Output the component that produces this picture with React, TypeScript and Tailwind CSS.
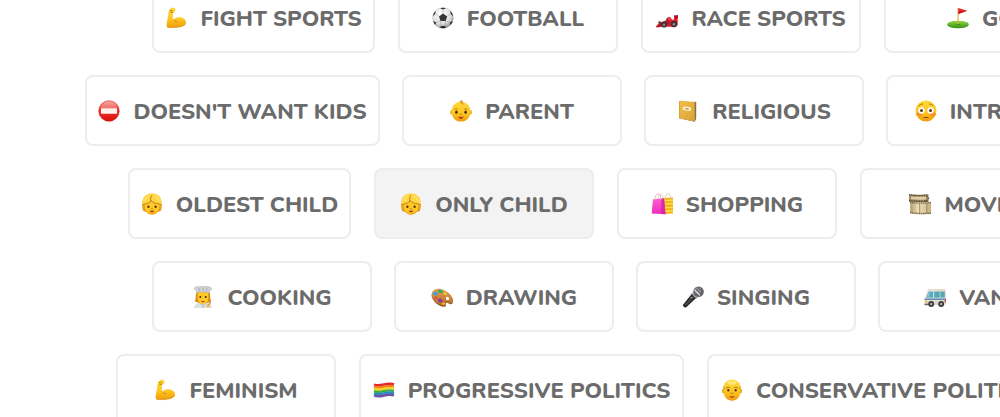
import type { ReactNode } from "react";

type Pill = { label: string; icon: ReactNode; width?: string; active?: boolean };
type Row = { indent: string; pills: Pill[] };

function Icon({ children }: { children: ReactNode }) {
  return (
    <svg viewBox="0 0 22 22" className="size-[22px] shrink-0" aria-hidden="true">
      {children}
    </svg>
  );
}

function Gradients() {
  return (
    <svg className="absolute size-0" aria-hidden="true">
      <defs>
        <linearGradient id="skin" x1="0" y1="0" x2="0" y2="1">
          <stop offset="0" stopColor="#ffd83a" />
          <stop offset="0.6" stopColor="#fdc41f" />
          <stop offset="1" stopColor="#ee9c0c" />
        </linearGradient>
        <linearGradient id="hair" x1="0" y1="0" x2="0" y2="1">
          <stop offset="0" stopColor="#ffe05c" />
          <stop offset="0.5" stopColor="#f5b92a" />
          <stop offset="1" stopColor="#d98e10" />
        </linearGradient>
        <radialGradient id="ball" cx="0.4" cy="0.3" r="0.75">
          <stop offset="0" stopColor="#ffffff" />
          <stop offset="0.65" stopColor="#dedede" />
          <stop offset="1" stopColor="#858585" />
        </radialGradient>
        <linearGradient id="red" x1="0" y1="0" x2="0" y2="1">
          <stop offset="0" stopColor="#f7938a" />
          <stop offset="0.4" stopColor="#ee3a30" />
          <stop offset="1" stopColor="#d90d08" />
        </linearGradient>
        <linearGradient id="green" x1="0" y1="0" x2="0" y2="1">
          <stop offset="0" stopColor="#8fd83f" />
          <stop offset="1" stopColor="#3f9a1c" />
        </linearGradient>
        <linearGradient id="book" x1="0" y1="0" x2="1" y2="1">
          <stop offset="0" stopColor="#f2c043" />
          <stop offset="1" stopColor="#d9a13a" />
        </linearGradient>
        <linearGradient id="pink" x1="0" y1="0" x2="0" y2="1">
          <stop offset="0" stopColor="#ff5fd0" />
          <stop offset="1" stopColor="#f02cc0" />
        </linearGradient>
        <linearGradient id="film" x1="0" y1="0" x2="1" y2="0">
          <stop offset="0" stopColor="#b39a6b" />
          <stop offset="0.4" stopColor="#f0e2bd" />
          <stop offset="1" stopColor="#c5ae80" />
        </linearGradient>
        <linearGradient id="wood" x1="0" y1="0" x2="0" y2="1">
          <stop offset="0" stopColor="#dda057" />
          <stop offset="1" stopColor="#bd6c24" />
        </linearGradient>
      </defs>
    </svg>
  );
}

const Biceps = () => (
  <Icon>
    <path
      d="M6.2 1.2C7.4.3 9.2.4 10 1.600c.7 1.100.5 2.300-.2 3.100-.6.7-1.400.8-2 .8.300 1.700 0 3.400-.1 5.400 0 .8.500 1.600 1.300 1.700 1.100-1.600 3.300-2.500 5.600-2.300 3.400.2 6.300 2.300 6.400 5 .1 2.400-2.300 3.900-5.200 4.400-3.500.7-7.800.9-11.600.9-1.700 0-2.700-.8-2.600-2.500C1.800 14.500 3.300 9.600 3.500 5.600c.1-2 .8-3.300 2.700-4.400Z"
      fill="url(#skin)"
    />
    <path d="M5.400 3.500c1-.7 1.700-.3 2.300.6M7.700 5.500 5.500 5.200M9 12.800c.3 1.100 1.200 1.900 2.600 2" fill="none" stroke="#bd7811" strokeWidth="0.9" strokeLinecap="round" />
    <path d="M2 20c3.800 1 9.600.7 14-.5 2-.6 4-1.700 4.800-3.300" fill="none" stroke="#dd8e09" strokeWidth="0.7" />
  </Icon>
);

const Soccer = () => (
  <Icon>
    <circle cx="11" cy="11" r="10.300" fill="url(#ball)" stroke="#999" strokeWidth="0.4" />
    <path d="m11 6.600 4.100 2.800-1.500 4.700H8.500L7 9.400Z" fill="#343434" />
    <path d="m8.200 1.200 2.900 1.400 2.700-1.400C12 .5 10 .5 8.200 1.200ZM1 9.200 3.400 6.600 3.700 4C2 5.500 1 7.300 1 9.200ZM18.300 4l.3 2.700L21 9.200c-.2-2-1.200-3.900-2.700-5.200ZM3.500 18l.6-2.600L1.300 14c.4 1.600 1.200 3 2.200 4ZM18.500 18l-.6-2.600 2.800-1.400c-.4 1.600-1.200 3-2.200 4ZM8 20.800l1-1.800h4l1 1.800c-2 .6-4 .6-6 0Z" fill="#2e2e2e" />
    <path d="M11 2.600v4M3.400 6.700 7 9.400M18.600 6.700l-3.500 2.700M4.100 15.400l4.400-1.300M17.900 15.400l-4.300-1.300M8.500 14.100 9 19M13.600 14.100 13 19" stroke="#999" strokeWidth="0.5" />
  </Icon>
);

const RaceCar = () => (
  <Icon>
    <path d="M0 19 4.600 15.300l5-1.600 1.800-3.200 2.200-.3 2.300 2.600 2.200-.2.400-3.600h3.200v9.300l-3 1.500H1Z" fill="#e11a2c" />
    <path d="m18 8.600 4-.5v3.100l-3.400.6Z" fill="#b80f22" />
    <path d="m4.500 15.500 5.400-1.600 4.400 1-3.600 3.700H1.700Z" fill="#8f2034" />
    <path d="m11.900 10.600 1.300-.8 1.700.6.900 2.400-4.600.8Z" fill="#f43745" />
    <path d="m9.600 13.800 1.600-3 1.200 2.500Z" fill="#663a42" />
    <path d="m0 19.600 4.200-1.100 1 1.500-4.800.4Z" fill="#bd1025" />
    <circle cx="8" cy="17.700" r="2.800" fill="#3b3334" />
    <circle cx="8" cy="17.700" r="1.200" fill="#9c8588" />
    <circle cx="18" cy="17.200" r="3.100" fill="#3b3334" />
    <circle cx="18" cy="17.200" r="1.300" fill="#a08c8c" />
    <path d="M4.300 14.800c-1 0-1.400.7-1.400 1.700" fill="none" stroke="#403034" strokeWidth="1.500" />
  </Icon>
);

const Golf = () => (
  <Icon>
    <ellipse cx="11" cy="17.800" rx="10.700" ry="3.500" fill="#378719" />
    <ellipse cx="11" cy="17.100" rx="10.700" ry="3.300" fill="url(#green)" />
    <ellipse cx="11.200" cy="17.400" rx="2" ry="0.700" fill="#397b15" />
    <path d="M11 1v16.500" stroke="#e2b44d" strokeWidth="1.200" />
    <path d="m11.400.9 8.800 2.900-8.800 3.200Z" fill="#e32929" />
    <path d="m11.400 4.700 8.800-.9-8.800 3.200Z" fill="#bd171e" />
  </Icon>
);

const NoEntry = () => (
  <Icon>
    <circle cx="11" cy="11" r="10.300" fill="url(#red)" stroke="#c91b13" strokeWidth="0.500" />
    <path d="M2.500 8.100C3.500 4 7 1.500 11 1.500s7.500 2.500 8.500 6.600Z" fill="#fff" opacity="0.220" />
    <rect x="3" y="8.300" width="16" height="5.400" rx="0.700" fill="#fff2ef" />
  </Icon>
);

const Baby = () => (
  <Icon>
    <ellipse cx="1.700" cy="12.300" rx="1.700" ry="2.300" fill="#f4af1b" />
    <ellipse cx="20.300" cy="12.300" rx="1.700" ry="2.300" fill="#f4af1b" />
    <path d="M11 1.700c5.800 0 9.400 4.200 9.400 10 0 6-3.900 9.900-9.400 9.900s-9.400-3.900-9.400-9.900c0-5.800 3.600-10 9.400-10Z" fill="url(#skin)" />
    <path d="M10 1.700C10.100.7 11.200 0 12 .8c.9.900.4 2.200-.8 2.500M11 2c1.700.3 2 .9 1.700 2.100" fill="none" stroke="#c78317" strokeWidth="1" strokeLinecap="round" />
    <ellipse cx="6.400" cy="12.200" rx="1.200" ry="1.600" fill="#432b18" />
    <ellipse cx="15.600" cy="12.200" rx="1.200" ry="1.600" fill="#432b18" />
    <path d="M4.500 9.500c.8-.8 2-.9 3-.4M14.500 9.100c1-.5 2.200-.4 3 .4M10 14.200c.5.500 1.500.500 2 0" fill="none" stroke="#bd7918" strokeWidth="0.900" strokeLinecap="round" />
    <path d="M8.300 16.600c1.700.6 3.700.6 5.400 0-.5 1.700-1.400 2.400-2.700 2.400s-2.200-.7-2.700-2.400Z" fill="#b5332c" />
  </Icon>
);

const Book = () => (
  <Icon>
    <path d="m2 1 15.700 1.200 1.500-.7v17.200l-1.500 3L2 18.300Z" fill="#8b6b4a" />
    <path d="m2 .7 2.200-.3 15 .8-1.500 1Z" fill="#f5e7b6" />
    <path d="m2 1 15.700 1.200v19.300L2 18.300Z" fill="url(#book)" />
    <path d="M2.600 1.200v17" stroke="#d09a35" strokeWidth="0.8" />
    <path d="M17.700 2.200v19.300" stroke="#c79445" strokeWidth="0.500" />
    <path d="m8 6.600 4 .4c1.500.2 2.300.9 2.300 2.100s-.8 1.900-2.300 1.800l-4-.4c-1.500-.2-2.300-.9-2.300-2.100S6.500 6.500 8 6.600Z" fill="#fbeec8" />
    <path d="m8.300 8.700 3.400.4" stroke="#9c6b31" strokeWidth="1" />
  </Icon>
);

const Flushed = () => (
  <Icon>
    <circle cx="11" cy="11" r="10.500" fill="url(#skin)" />
    <ellipse cx="4.400" cy="14.200" rx="3" ry="2.200" fill="#f57b2a" opacity="0.650" />
    <ellipse cx="17.600" cy="14.200" rx="3" ry="2.200" fill="#f57b2a" opacity="0.650" />
    <circle cx="6.500" cy="10.500" r="3.200" fill="#fff" />
    <circle cx="15.500" cy="10.500" r="3.200" fill="#fff" />
    <circle cx="6.500" cy="10.600" r="1.500" fill="#5b3516" />
    <circle cx="15.500" cy="10.600" r="1.500" fill="#5b3516" />
    <path d="M4 5.700c.9-1.100 2.100-1.700 3.500-1.700M14.500 4c1.400 0 2.600.6 3.500 1.700" fill="none" stroke="#a65d11" strokeWidth="0.900" strokeLinecap="round" />
    <path d="M9 17.500h4" stroke="#8a4517" strokeWidth="1.100" strokeLinecap="round" />
  </Icon>
);

const Child = () => (
  <Icon>
    <path d="M11 .4c5.800-.3 9.600 3.300 9.400 9.100.7 2.100.8 5.600-.6 8.200-2.600 2-15 2-17.600 0-1.400-2.600-1.300-6.100-.6-8.200C1.400 3.700 5.200.1 11 .4Z" fill="url(#hair)" />
    <path d="M4 10.500C4 7 7 5.600 11 5.600s7 1.400 7 4.900v4c0 4.600-3.200 7.100-7 7.100s-7-2.500-7-7.100Z" fill="#ffc928" />
    <path d="M4.300 16.500c.9 3.400 3.600 5.100 6.700 5.100s5.800-1.700 6.700-5.100c-1.500 2.400-3.800 3.800-6.700 3.800s-5.200-1.400-6.700-3.800Z" fill="#f0a314" />
    <path d="M1.600 12C1.200 5 5 .6 11 .5s9.800 4.500 9.400 11.500c-.8.300-1.700-.1-2.500-1-3.200-.2-5.800-1.100-7.700-3C8.500 10 6.500 11 4.100 11c-.8.900-1.700 1.300-2.500 1Z" fill="#ffd544" />
    <path d="M1.800 11.700c.9 0 1.600-.3 2.300-.9 2.500-.1 4.500-1.200 6.100-3 1.900 1.900 4.500 2.900 7.700 3 .7.600 1.400.9 2.300.9M9.900 7.800c-.6-2-.3-3.800.8-5.400" fill="none" stroke="#bd7411" strokeWidth="0.900" strokeLinecap="round" />
    <path d="M4.200 7.500c.4-2 1.600-3.400 3.300-4.200M14 3.300c1.800.6 3.200 2.200 3.700 4.200" fill="none" stroke="#fff0a0" strokeWidth="1" strokeLinecap="round" />
    <ellipse cx="7.400" cy="13.700" rx="1.100" ry="1.300" fill="#4b2c13" />
    <ellipse cx="14.600" cy="13.700" rx="1.100" ry="1.300" fill="#4b2c13" />
    <path d="M10.200 15.700c.5.300 1.100.3 1.600 0" fill="none" stroke="#b26c13" strokeWidth="0.800" strokeLinecap="round" />
    <path d="M8.700 17.400c1.500.5 3.100.5 4.600 0-.5 1.400-1.200 1.900-2.300 1.900s-1.800-.5-2.300-1.900Z" fill="#a93426" />
  </Icon>
);

const Bags = () => (
  <Icon>
    <path d="m13 5 9-.6.2 16L13 21Z" fill="#f2b512" />
    <path d="m13 7.500 9-.4M13 11l9-.3M13 14.500l9-.2M13 18l9-.2" stroke="#ffdf53" strokeWidth="1.300" />
    <path d="M14.300 6c-.2-7 5.300-7 5.600 0" fill="none" stroke="#dfc2a0" strokeWidth="0.900" />
    <path d="m2 6.200 11-.9 1.500 16L.7 20.600Z" fill="url(#pink)" />
    <path d="m10.400 5.500 2.600-.2 1.500 16-4.500-.2Z" fill="#d72ba9" />
    <path d="M4 7.200c0-8.500 5.800-8.500 6.200-.5" fill="none" stroke="#e6a9c5" strokeWidth="1" />
    <path d="M7.200 5.500c.6-6 4.700-5.300 5.100.3" fill="none" stroke="#d4c09b" strokeWidth="0.700" />
  </Icon>
);

const Film = () => (
  <Icon>
    <path d="M0 1.300c6 .8 11.500.8 19.300.3v7.600c-6.500.7-13.500.6-19.300-.4Z" fill="#a08a60" />
    <path d="M0 1.700c6 .8 11.500.8 19.300.3M0 7.500c6 1 12 1 19.300.5" stroke="#54472f" strokeWidth="1.300" strokeDasharray="1.100 0.600" fill="none" />
    <path d="M2 3.600c4 .3 9.600.4 15 0v2.800c-4.200.4-10 .4-15-.1Z" fill="#dfcea5" />
    <path d="M1.200 8.500c6.500 1.400 14 .8 20.800.3v12.100c-7 .7-14.500.7-20.800-.7Z" fill="url(#film)" />
    <path d="M1.200 9.300c6.500 1.400 14 .8 20.800.3M1.200 19.500c6.500 1.300 14 1.200 20.800.6" stroke="#6a5a3d" strokeWidth="1.300" strokeDasharray="1.100 0.700" fill="none" />
    <path d="M10.700 10.200v9.800M17.900 10.200V20" stroke="#8a7650" strokeWidth="0.800" />
    <path d="M17 3c4 1 3.700 4-1 5.100" fill="none" stroke="#5e5037" strokeWidth="1" />
  </Icon>
);

const Cook = () => (
  <Icon>
    <path d="M4.700 5.900C3.300 9 4.200 12 2.800 15.300l4 1.700h8.500l3.800-1.700c-1.300-3-.4-6.300-1.700-9.400Z" fill="#d98f14" />
    <path d="M2 22c.2-4 3.200-5.300 9-5.300s8.800 1.300 9 5.300Z" fill="#dce1e5" />
    <path d="m7.500 17 3.500 2.400 3.500-2.400M11 19.400V22" fill="none" stroke="#a5acb5" strokeWidth="0.800" />
    <path d="M5.700 6h10.600v6c0 3.700-2.300 6-5.300 6s-5.300-2.300-5.300-6Z" fill="#ffc928" />
    <path d="M5.200 6.500 4.300 4.300C1.900 4 1.800 1.400 4 1 6 .6 7 .6 8 .9c2-1.100 4-1.100 6 0 1.400-.4 3.300-.3 4.500.4 1.800 1.200 1 3-.8 3.100l-.8 2.400c-3.700-1-7.900-1-11.700-.3Z" fill="#cfd1d4" stroke="#a0a3a8" strokeWidth="0.500" />
    <path d="m7 2.300.5 2.900M11 1.900v3.200M15 2.300l-.5 2.900" stroke="#9a9da2" strokeWidth="0.700" />
    <circle cx="8.300" cy="11" r="1" fill="#4a2a10" />
    <circle cx="13.700" cy="11" r="1" fill="#4a2a10" />
    <path d="M9.200 14.700c1.200.4 2.400.4 3.600 0-.5 1.200-1 1.500-1.800 1.500s-1.400-.4-1.800-1.500Z" fill="#ae3b25" />
    <path d="m15.800 20.700 3-5.200" stroke="#bd793c" strokeWidth="1.200" />
    <circle cx="16" cy="19.700" r="1.500" fill="#f2b82b" />
  </Icon>
);

const Palette = () => (
  <Icon>
    <path d="M1 7.700C2.800 3 8 2.500 13.700 5.200c5.500 2.500 9.300 8 8 11.600-1 2.500-3.100 1.200-4.700.2-1.300-.8-2.600.1-2.200 1.400.7 2.600-1.500 3-4.400 1.900C4.500 18.300-.7 12.200 1 7.700Z" fill="#8e571f" />
    <path d="M1 6.900C2.800 2.200 8 1.700 13.700 4.400c5.500 2.500 9.300 8 8 11.400-1 2.300-3.100 1-4.700 0-1.300-.8-2.600.1-2.200 1.400.7 2.600-1.500 3-4.400 1.900C4.500 17.100-.7 11.400 1 6.900Z" fill="url(#wood)" />
    <ellipse cx="16.500" cy="12.500" rx="1.500" ry="1.900" fill="#fff" transform="rotate(-35 16.500 12.500)" />
    <ellipse cx="4.500" cy="7.600" rx="2.300" ry="1.900" fill="#36a4dc" />
    <ellipse cx="9.400" cy="5.300" rx="2.500" ry="1.500" fill="#34af47" transform="rotate(15 9.400 5.300)" />
    <ellipse cx="14.100" cy="7.700" rx="1.900" ry="1.300" fill="#eec337" transform="rotate(30 14.100 7.700)" />
    <ellipse cx="4.900" cy="11.900" rx="1.800" ry="1.400" fill="#df513d" />
    <ellipse cx="9.300" cy="14.500" rx="2.500" ry="1.800" fill="#8e36ad" transform="rotate(18 9.300 14.500)" />
    <ellipse cx="12.500" cy="17.700" rx="1.600" ry="1" fill="#e7c52b" />
  </Icon>
);

const Microphone = () => (
  <Icon>
    <path d="M10.300 7.300 14.700 11.500 4 21.400c-1.300.6-3.500-1.300-3-2.700Z" fill="#292a2c" />
    <path d="m11.300 8.600 1.300 1.100-9.200 9.200" fill="none" stroke="#56585b" strokeWidth="1.100" />
    <path d="m10.500 6.400 5.400 5.200-1.500 1.200-5.300-5.200Z" fill="#a4a5a7" />
    <circle cx="16.500" cy="5.700" r="5.300" fill="#66686b" />
    <circle cx="16" cy="4.600" r="3.400" fill="#929497" />
    <path d="m13.400 2.500 6 6M15.700.9l5.300 5.500M12 5l5 5M20 1.800l-6.700 6.600M17.700.7 12.300 6M21.300 4.500 16 9.900" stroke="#46484b" strokeWidth="0.500" />
    <path d="m12.500 4 5.500 5.500" stroke="#dadbdb" strokeWidth="1.200" />
    <path d="m8.500 12.200 1.300-1.300" stroke="#d7d7d7" strokeWidth="1" />
  </Icon>
);

const Van = () => (
  <Icon>
    <path d="M4 3.500 20 3c1.300 0 1.800.6 1.900 1.700L22 18l-3 1.100H1.200C.2 18.500 0 14.500.6 12.200L4 3.500Z" fill="#e6e2da" />
    <path d="M4 3.200 20 3c1 0 1.600.4 1.800 1.200H3.700Z" fill="#e3d9c4" />
    <path d="M4.600 5.500 2.200 11.600l7 .2V5.500Z" fill="#4fb0c4" />
    <path d="M10.200 5.500h10.600v6.100l-10.600.2Z" fill="#57a6b0" />
    <path d="m5.600 6.500-1.600 4M16 5.500v6.100" stroke="#cce2e2" strokeWidth="0.700" />
    <path d="M.6 13.200H22" stroke="#3a76a8" strokeWidth="1.200" />
    <path d="M1.200 15H22v3L19 19H1.200Z" fill="#ded5c8" />
    <path d="M.3 17.800h6v1.400H.7Z" fill="#666a6c" />
    <rect x="0.800" y="14.800" width="2.300" height="1.500" rx="0.600" fill="#e9b637" />
    <rect x="20.700" y="13.600" width="1.200" height="2.700" fill="#cf2d20" />
    <circle cx="7.200" cy="18" r="2.900" fill="#363637" />
    <circle cx="7.200" cy="18" r="1.200" fill="#b3b3b2" />
    <circle cx="17.200" cy="18" r="2.900" fill="#363637" />
    <circle cx="17.200" cy="18" r="1.200" fill="#b3b3b2" />
  </Icon>
);

const stripes = ["#e5252c", "#f57f20", "#f8d51e", "#43ad43", "#278ec5", "#6f52a8"];

const Rainbow = () => (
  <Icon>
    {stripes.map((color, i) => (
      <path
        key={color}
        d="M1 5.500c3.200 1.500 6.400.9 10 0 3.500-.9 6.400-1.300 10-.1"
        transform={`translate(0 ${i * 2.2})`}
        stroke={color}
        strokeWidth="2.400"
        fill="none"
      />
    ))}
  </Icon>
);

const Bald = () => (
  <Icon>
    <ellipse cx="2.300" cy="12" rx="1.300" ry="2.400" fill="#e79e19" />
    <ellipse cx="19.700" cy="12" rx="1.300" ry="2.400" fill="#e79e19" />
    <path d="M11 .4c5 0 8.500 3.600 8.500 8.900v3c0 5.900-4 9.500-8.500 9.500s-8.500-3.600-8.500-9.500v-3C2.500 4 6 .4 11 .4Z" fill="url(#skin)" />
    <ellipse cx="11" cy="3.800" rx="4.700" ry="2.100" fill="#fff09b" opacity="0.650" />
    <path d="M2.500 7.500c.6.800.6 1.700.5 2.900M19.500 7.500c-.6.800-.6 1.700-.5 2.900" fill="none" stroke="#c48b34" strokeWidth="1" />
    <ellipse cx="7.300" cy="11.200" rx="1" ry="1.200" fill="#4b2b14" />
    <ellipse cx="14.700" cy="11.200" rx="1" ry="1.200" fill="#4b2b14" />
    <path d="M5.300 9c.9-.8 2.200-.9 3.200-.4M13.500 8.600c1-.5 2.300-.4 3.200.4M9.900 14.200c.6.500 1.600.5 2.200 0" fill="none" stroke="#9b621e" strokeWidth="0.800" strokeLinecap="round" />
    <path d="M8.500 17c1.600.5 3.400.5 5 0-.5 1.400-1.300 1.800-2.500 1.800s-2-.4-2.500-1.800Z" fill="#ad3d25" />
  </Icon>
);

const rows: Row[] = [
  {
    indent: "gap-[23px] pl-[152px]",
    pills: [
      { label: "FIGHT SPORTS", icon: <Biceps />, width: "min-w-[223px]" },
      { label: "FOOTBALL", icon: <Soccer /> },
      { label: "RACE SPORTS", icon: <RaceCar /> },
      { label: "GOLF", icon: <Golf /> },
    ],
  },
  {
    indent: "gap-[22px] pl-[85px]",
    pills: [
      { label: "DOESN'T WANT KIDS", icon: <NoEntry />, width: "min-w-[295px]" },
      { label: "PARENT", icon: <Baby /> },
      { label: "RELIGIOUS", icon: <Book /> },
      { label: "INTROVERT", icon: <Flushed /> },
    ],
  },
  {
    indent: "gap-[23px] pl-[128px]",
    pills: [
      { label: "OLDEST CHILD", icon: <Child />, width: "min-w-[223px]" },
      { label: "ONLY CHILD", icon: <Child />, active: true },
      { label: "SHOPPING", icon: <Bags /> },
      { label: "MOVIES", icon: <Film /> },
    ],
  },
  {
    indent: "gap-[22px] pl-[152px]",
    pills: [
      { label: "COOKING", icon: <Cook /> },
      { label: "DRAWING", icon: <Palette /> },
      { label: "SINGING", icon: <Microphone /> },
      { label: "VANLIFE", icon: <Van /> },
    ],
  },
  {
    indent: "gap-[23px] pl-[116px]",
    pills: [
      { label: "FEMINISM", icon: <Biceps /> },
      { label: "PROGRESSIVE POLITICS", icon: <Rainbow />, width: "min-w-[325px]" },
      { label: "CONSERVATIVE POLITICS", icon: <Bald />, width: "min-w-[340px]" },
    ],
  },
];

function InterestPill({ label, icon, width = "min-w-[220px]", active = false }: Pill) {
  return (
    <button
      type="button"
      aria-pressed={active}
      className={`flex h-[71px] shrink-0 items-center justify-center gap-[13px] rounded-lg border-2 border-[#ededed] px-2 text-[22px] leading-7 font-extrabold whitespace-nowrap text-[#6b6b6b] ${width} ${active ? "bg-[#f3f3f3]" : "bg-white"}`}
    >
      {icon}
      <span className="pt-[3px]">{label}</span>
    </button>
  );
}

export default function App() {
  return (
    <main className="h-screen overflow-hidden bg-white font-['Nunito','Lato',sans-serif]">
      <Gradients />
      <div className="-mt-[18px] flex flex-col gap-[22px]">
        {rows.map((row) => (
          <div key={row.pills[0].label} className={`flex ${row.indent}`}>
            {row.pills.map((pill) => (
              <InterestPill key={pill.label} {...pill} />
            ))}
          </div>
        ))}
      </div>
    </main>
  );
}
